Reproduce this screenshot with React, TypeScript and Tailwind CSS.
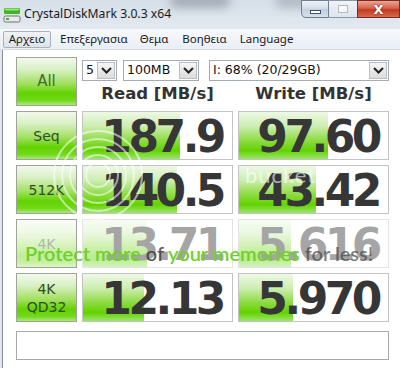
import React from 'react';

const rows = [
  { label: ['Seq'], read: '187.9', readPct: 65, write: '97.60', writePct: 60 },
  { label: ['512K'], read: '140.5', readPct: 63, write: '43.42', writePct: 52 },
  { label: ['4K'], read: '13.71', readPct: 43, write: '5.616', writePct: 35, faded: true },
  { label: ['4K', 'QD32'], read: '12.13', readPct: 41, write: '5.970', writePct: 36 },
];

const greenBtn =
  'bg-[linear-gradient(to_bottom,#f2f9ec_0%,#d9f0c4_25%,#9fe05c_55%,#62d200_75%,#72d81c_90%,#a9e97a_100%)]';
const greenBar =
  'bg-[linear-gradient(to_bottom,#eef8e6_0%,#cdeeb2_30%,#8fdc45_60%,#62d200_82%,#9be66a_100%)]';

function Chevron() {
  return (
    <svg width="11" height="7" viewBox="0 0 11 7">
      <path d="M1 1 L5.5 5.5 L10 1" fill="none" stroke="#222" strokeWidth="2" />
    </svg>
  );
}

function Select({ value, w }: { value: string; w: string }) {
  return (
    <div className={`${w} h-[21px] flex items-stretch border border-[#a5acb5] bg-white`}>
      <div className="flex-1 flex items-center pl-[3px] text-[12.5px] text-[#111] leading-none">{value}</div>
      <div className="w-[18px] m-[1px] flex items-center justify-center border border-[#b8bec6] bg-[linear-gradient(to_bottom,#f6f6f6,#dcdcdc)]">
        <Chevron />
      </div>
    </div>
  );
}

function ValueBox({ value, pct }: { value: string; pct: number }) {
  return (
    <div className="relative h-[49px] border border-[#c3c3c3] bg-white overflow-hidden">
      <div className={`absolute left-0 top-0 bottom-0 ${greenBar}`} style={{ width: `${pct}%` }} />
      <div className="relative h-full flex items-center justify-end pr-[9px] pt-[2px] text-[44px] font-bold tracking-[-3.5px] text-[#363636] leading-none">
        {value}
      </div>
    </div>
  );
}

export default function App() {
  return (
    <div className="relative w-[400px] h-[368px] overflow-hidden flex flex-col bg-[#dfe6ee] font-['DejaVu_Sans',sans-serif]">
      {/* title bar */}
      <div className="relative h-[29px] flex items-center bg-[linear-gradient(to_bottom,#d6dfe9,#e3e9f0)]">
        <div className="absolute left-[170px] top-[-6px] w-[60px] h-[14px] rounded-full bg-[#8d97a3] blur-[5px] opacity-70" />
        <div className="absolute left-[275px] top-[-6px] w-[40px] h-[14px] rounded-full bg-[#98a2ad] blur-[5px] opacity-60" />
        <svg className="ml-[3px]" width="18" height="16" viewBox="0 0 18 16">
          <rect x="1" y="1" width="16" height="6" rx="1.5" fill="#3cb521" />
          <rect x="2" y="1.6" width="14" height="2" rx="1" fill="#9be57f" />
          <rect x="1" y="9" width="16" height="6" rx="1.5" fill="#e8eaec" stroke="#6d7378" />
          <rect x="3" y="11" width="3" height="2" fill="#44b52a" />
        </svg>
        <span className="relative ml-[3px] text-[12.2px] text-[#1a1a1a] font-['Noto_Sans',sans-serif]">
          CrystalDiskMark 3.0.3 x64
        </span>
        <div className="absolute right-0 top-0 flex">
          <div className="w-[28px] h-[18px] flex items-center justify-center border border-[#6f7f92] rounded-bl-[5px] bg-[linear-gradient(to_bottom,#eef2f7,#d2dbe6_50%,#c2cede_51%,#d6e0ea)]">
            <div className="w-[11px] h-[4px] bg-white border border-[#40506a] mt-[5px]" />
          </div>
          <div className="w-[28px] h-[18px] flex items-center justify-center border-y border-[#8a97a8] bg-[linear-gradient(to_bottom,#f0f3f7,#dde4ec)]">
            <div className="w-[10px] h-[8px] border border-[#b2bcc8] bg-white/60" />
          </div>
          <div className="w-[43px] h-[18px] flex items-center justify-center border border-[#7a2a20] bg-[linear-gradient(to_bottom,#eba696,#d7624c_45%,#c23a22_55%,#d66a4c)]">
            <span className="text-white font-bold text-[13px] leading-none [text-shadow:0_0_2px_#5a1a10]">X</span>
          </div>
        </div>
      </div>

      {/* menu bar */}
      <div className="h-[21px] flex items-center px-[3px] border-b border-[#d5dbe3] bg-[linear-gradient(to_bottom,#f7f9fc,#e9eef6)] text-[11.5px] text-[#1a1a1a] font-['Noto_Sans',sans-serif]">
        <div className="h-[17px] w-[48px] flex items-center justify-center border border-[#a9b2bc] rounded-[2px] bg-[linear-gradient(to_bottom,#f0f2f4,#dfe3e8)]">
          Αρχειο
        </div>
        <span className="ml-[9px]">Επεξεργασια</span>
        <span className="ml-[12px]">Θεμα</span>
        <span className="ml-[14px]">Βοηθεια</span>
        <span className="ml-[13px]">Language</span>
      </div>

      {/* content */}
      <div className="relative flex-1 ml-[2px] border-l border-[#8c8c8c] bg-white pl-[13px] pt-[7px]">
        <div className="grid grid-cols-[61px_151px_151px] gap-[5px]">
          <div className={`h-[49px] flex items-center justify-center border border-[#9ea596] ${greenBtn} text-[15px] text-[#3f6e2a]`}>
            All
          </div>
          <div className="col-span-2 flex flex-col">
            <div className="flex items-center mt-[3px]">
              <Select value="5" w="w-[36px]" />
              <div className="ml-[6px]"><Select value="100MB" w="w-[76px]" /></div>
              <div className="ml-[10px]"><Select value="I: 68% (20/29GB)" w="w-[180px]" /></div>
            </div>
            <div className="grid grid-cols-2 gap-[5px] mt-[5px] text-[16.5px] font-bold text-[#333] leading-none">
              <div className="text-center">Read [MB/s]</div>
              <div className="text-center">Write [MB/s]</div>
            </div>
          </div>

          {rows.map((r) => (
            <React.Fragment key={r.read}>
              <div className={`relative h-[49px] flex flex-col items-center justify-center border border-[#9ea596] ${greenBtn} text-[14px] leading-[18px] text-[#2f4d22]`}>
                {r.label.map((l) => (
                  <span key={l}>{l}</span>
                ))}
                {r.faded && <div className="absolute inset-0 bg-white/60" />}
              </div>
              <div className="relative">
                <ValueBox value={r.read} pct={r.readPct} />
                {r.faded && <div className="absolute inset-0 bg-white/55" />}
              </div>
              <div className="relative">
                <ValueBox value={r.write} pct={r.writePct} />
                {r.faded && <div className="absolute inset-0 bg-white/55" />}
              </div>
            </React.Fragment>
          ))}
        </div>
        <div className="mt-[9px] w-[373px] h-[29px] border border-[#a8a8a8] bg-white" />

        {/* watermark overlay */}
        <svg className="absolute left-[30px] top-[70px] pointer-events-none" width="130" height="110" viewBox="0 0 130 110">
          <g fill="none" stroke="white" strokeOpacity="0.55" strokeWidth="2">
            <circle cx="65" cy="55" r="12" />
            <circle cx="65" cy="55" r="20" />
            <circle cx="65" cy="55" r="28" />
            <circle cx="65" cy="55" r="36" />
            <circle cx="65" cy="55" r="44" />
          </g>
        </svg>
        <div className="absolute left-[242px] top-[108px] text-[22px] text-white/60 tracking-[1px] pointer-events-none font-['Lato',sans-serif]">
          bucket
        </div>
        <div className="absolute left-[22px] top-[188px] whitespace-nowrap text-[20px] font-semibold text-[#6fd02a] pointer-events-none font-['Lato',sans-serif]">
          Protect more <span className="text-[#333]/80">of</span> your memories <span className="text-[#444]/70">for less!</span>
        </div>
      </div>
    </div>
  );
}
